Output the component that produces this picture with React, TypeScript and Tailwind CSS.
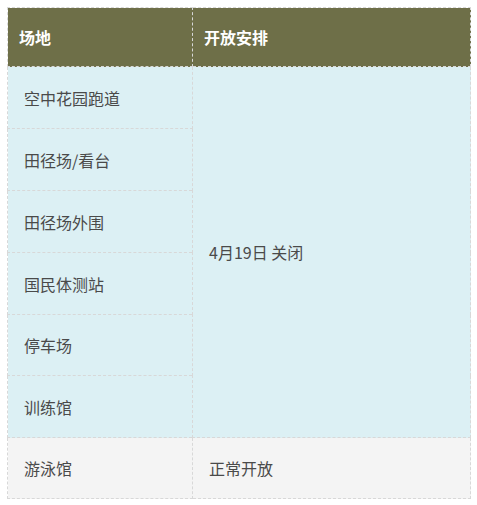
import React from "react";

const rows = ["空中花园跑道", "田径场/看台", "田径场外围", "国民体测站", "停车场", "训练馆"];
const heights = ["h-[62px]", "h-[62px]", "h-[62px]", "h-[62px]", "h-[61px]", "h-[62px]"];

export default function App() {
  return (
    <div
      className="w-[477px] h-[505px] bg-white pt-[7px] pl-[7px]"
      style={{ fontFamily: '"Noto Sans CJK SC", "Noto Sans", sans-serif' }}
    >
      <table className="w-[464px] border-collapse text-[16px] leading-none">
        <thead>
          <tr className="h-[59px] bg-[#6e6f48]">
            <th className="w-[185px] border border-dashed border-[#d8d8d8] pl-[11px] text-left font-bold text-white">
              场地
            </th>
            <th className="border border-dashed border-[#d8d8d8] pl-[11px] text-left font-bold text-white">
              开放安排
            </th>
          </tr>
        </thead>
        <tbody>
          {rows.map((r, i) => (
            <tr key={r} className={`${heights[i]} bg-[#dcf0f4]`}>
              <td className="border border-dashed border-[#d8d8d8] pl-[16px] text-[#4a4a4a]">{r}</td>
              {i === 0 && (
                <td
                  rowSpan={6}
                  className="border border-dashed border-[#d8d8d8] pl-[16px] text-[#4a4a4a]"
                >
                  4月19日 关闭
                </td>
              )}
            </tr>
          ))}
          <tr className="h-[61px] bg-[#f4f4f4]">
            <td className="border border-dashed border-[#d8d8d8] pl-[16px] text-[#4a4a4a]">游泳馆</td>
            <td className="border border-dashed border-[#d8d8d8] pl-[16px] text-[#4a4a4a]">正常开放</td>
          </tr>
        </tbody>
      </table>
    </div>
  );
}
